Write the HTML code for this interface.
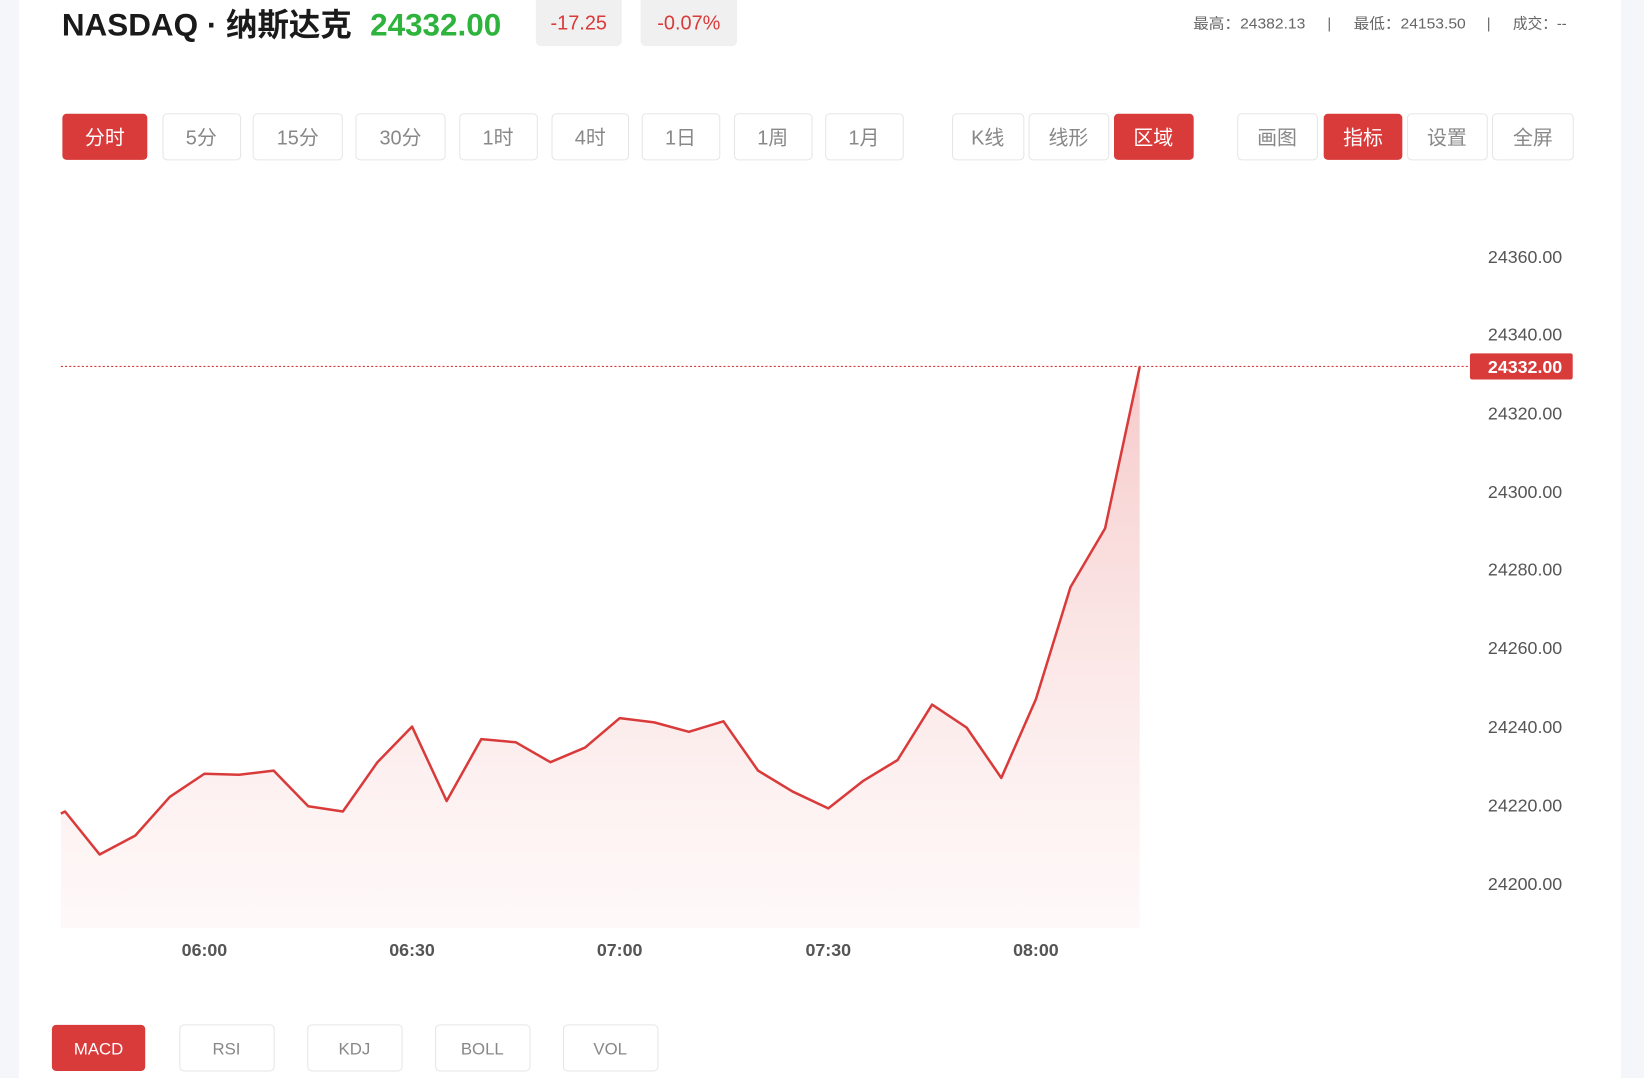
<!DOCTYPE html>
<html><head><meta charset="utf-8"><style>
html,body{margin:0;padding:0;width:1644px;height:1078px;overflow:hidden;background:#fff}
svg{display:block}
text{font-family:"Liberation Sans","Noto Sans CJK SC",sans-serif}
</style></head><body>
<svg width="1644" height="1078" viewBox="0 0 1568 1028.2" preserveAspectRatio="none" xmlns="http://www.w3.org/2000/svg">
<defs><linearGradient id="g" x1="0" y1="0" x2="0" y2="1"><stop offset="0" stop-color="#f3b7b7" stop-opacity="0.75"/><stop offset="1" stop-color="#fde9e9" stop-opacity="0.3"/></linearGradient></defs>
<rect width="1568" height="1029" fill="#fff"/>
<rect x="0" y="0" width="18" height="1029" fill="#f5f6fa"/>
<rect x="1546" y="0" width="22" height="1029" fill="#f5f6fa"/>
<text x="59" y="34" font-size="30" font-weight="bold" fill="#1a1a1a">NASDAQ · 纳斯达克</text>
<text x="353" y="34" font-size="30" font-weight="bold" fill="#2eb33c">24332.00</text>
<rect x="511" y="-6" width="82" height="50" rx="5" fill="#f0f0f0"/>
<text x="552" y="28" font-size="19" fill="#d93a3a" text-anchor="middle">-17.25</text>
<rect x="611" y="-6" width="92" height="50" rx="5" fill="#f0f0f0"/>
<text x="657" y="28" font-size="19" fill="#d93a3a" text-anchor="middle">-0.07%</text>
<g font-size="14" fill="#666">
<text x="1138" y="27" textLength="107" lengthAdjust="spacingAndGlyphs">最高：24382.13</text>
<text x="1266" y="27">|</text>
<text x="1291" y="27" textLength="107" lengthAdjust="spacingAndGlyphs">最低：24153.50</text>
<text x="1418" y="27">|</text>
<text x="1443" y="27">成交：--</text>
</g>
<g font-size="19" text-anchor="middle">
<rect x="59.5" y="108.5" width="81" height="44" rx="4" fill="#d93a3a"/><text x="100" y="138" fill="#fff">分时</text>
<rect x="155.5" y="108.5" width="74" height="44" rx="4" fill="#fff" stroke="#e6e6e6"/><text x="192" y="138" fill="#888">5分</text>
<rect x="241.5" y="108.5" width="85" height="44" rx="4" fill="#fff" stroke="#e6e6e6"/><text x="284" y="138" fill="#888">15分</text>
<rect x="339.5" y="108.5" width="85" height="44" rx="4" fill="#fff" stroke="#e6e6e6"/><text x="382" y="138" fill="#888">30分</text>
<rect x="438.5" y="108.5" width="74" height="44" rx="4" fill="#fff" stroke="#e6e6e6"/><text x="475" y="138" fill="#888">1时</text>
<rect x="526.5" y="108.5" width="73" height="44" rx="4" fill="#fff" stroke="#e6e6e6"/><text x="563" y="138" fill="#888">4时</text>
<rect x="612.5" y="108.5" width="74" height="44" rx="4" fill="#fff" stroke="#e6e6e6"/><text x="649" y="138" fill="#888">1日</text>
<rect x="700.5" y="108.5" width="74" height="44" rx="4" fill="#fff" stroke="#e6e6e6"/><text x="737" y="138" fill="#888">1周</text>
<rect x="787.5" y="108.5" width="74" height="44" rx="4" fill="#fff" stroke="#e6e6e6"/><text x="824" y="138" fill="#888">1月</text>
<rect x="908.5" y="108.5" width="68" height="44" rx="4" fill="#fff" stroke="#e6e6e6"/><text x="942" y="138" fill="#888">K线</text>
<rect x="981.5" y="108.5" width="76" height="44" rx="4" fill="#fff" stroke="#e6e6e6"/><text x="1019" y="138" fill="#888">线形</text>
<rect x="1062.5" y="108.5" width="76" height="44" rx="4" fill="#d93a3a"/><text x="1100" y="138" fill="#fff">区域</text>
<rect x="1180.5" y="108.5" width="76" height="44" rx="4" fill="#fff" stroke="#e6e6e6"/><text x="1218" y="138" fill="#888">画图</text>
<rect x="1262.5" y="108.5" width="75" height="44" rx="4" fill="#d93a3a"/><text x="1300" y="138" fill="#fff">指标</text>
<rect x="1342.5" y="108.5" width="76" height="44" rx="4" fill="#fff" stroke="#e6e6e6"/><text x="1380" y="138" fill="#888">设置</text>
<rect x="1423.5" y="108.5" width="77" height="44" rx="4" fill="#fff" stroke="#e6e6e6"/><text x="1462" y="138" fill="#888">全屏</text>
</g>
<g font-size="17" fill="#555" text-anchor="end">
<text x="1490" y="251">24360.00</text>
<text x="1490" y="325">24340.00</text>
<text x="1490" y="400">24320.00</text>
<text x="1490" y="475">24300.00</text>
<text x="1490" y="549">24280.00</text>
<text x="1490" y="624">24260.00</text>
<text x="1490" y="699">24240.00</text>
<text x="1490" y="774">24220.00</text>
<text x="1490" y="849">24200.00</text>
</g>
<line x1="58" y1="349.5" x2="1402" y2="349.5" stroke="#d93a3a" stroke-width="1" stroke-dasharray="2,2"/>
<rect x="1402" y="337" width="98" height="25" rx="2" fill="#d93a3a"/>
<text x="1490" y="356" font-size="17" font-weight="bold" fill="#fff" text-anchor="end">24332.00</text>
<path d="M58,776 L62,774 L95,815 L129,797 L162,760 L195,738 L228,739 L261,735 L294,769 L327,774 L360,727 L393,693 L426,764 L459,705 L492,708 L525,727 L558,713 L591,685 L624,689 L657,698 L690,688 L723,735 L756,755 L790,771 L823,745 L856,725 L889,672 L922,694 L955,742 L988,667 L1021,560 L1054,504 L1087,350 L1087,885 L58,885 Z" fill="url(#g)"/>
<path d="M58,776 L62,774 L95,815 L129,797 L162,760 L195,738 L228,739 L261,735 L294,769 L327,774 L360,727 L393,693 L426,764 L459,705 L492,708 L525,727 L558,713 L591,685 L624,689 L657,698 L690,688 L723,735 L756,755 L790,771 L823,745 L856,725 L889,672 L922,694 L955,742 L988,667 L1021,560 L1054,504 L1087,350" fill="none" stroke="#d93a3a" stroke-width="2.4" stroke-linejoin="round"/>
<g font-size="17" font-weight="bold" fill="#555" text-anchor="middle">
<text x="195" y="912">06:00</text><text x="393" y="912">06:30</text><text x="591" y="912">07:00</text><text x="790" y="912">07:30</text><text x="988" y="912">08:00</text>
</g>
<g font-size="16" text-anchor="middle">
<rect x="49.5" y="977.5" width="89" height="44" rx="4" fill="#d93a3a"/><text x="94" y="1006" fill="#fff">MACD</text>
<rect x="171.5" y="977.5" width="90" height="44" rx="4" fill="#fff" stroke="#e6e6e6"/><text x="216" y="1006" fill="#888">RSI</text>
<rect x="293.5" y="977.5" width="90" height="44" rx="4" fill="#fff" stroke="#e6e6e6"/><text x="338" y="1006" fill="#888">KDJ</text>
<rect x="415.5" y="977.5" width="90" height="44" rx="4" fill="#fff" stroke="#e6e6e6"/><text x="460" y="1006" fill="#888">BOLL</text>
<rect x="537.5" y="977.5" width="90" height="44" rx="4" fill="#fff" stroke="#e6e6e6"/><text x="582" y="1006" fill="#888">VOL</text>
</g>
</svg>
</body></html>
